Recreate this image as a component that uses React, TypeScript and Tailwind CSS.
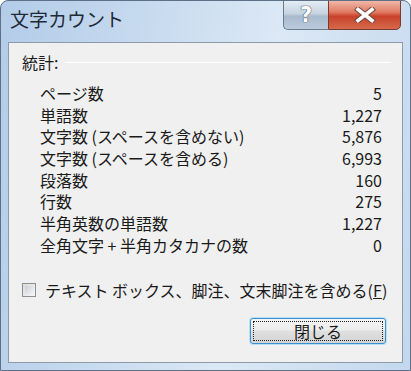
import React from "react";

const rows: [string, string][] = [
  ["ページ数", "5"],
  ["単語数", "1,227"],
  ["文字数 (スペースを含めない)", "5,876"],
  ["文字数 (スペースを含める)", "6,993"],
  ["段落数", "160"],
  ["行数", "275"],
  ["半角英数の単語数", "1,227"],
  ["全角文字 + 半角カタカナの数", "0"],
];

export default function App() {
  return (
    <div
      className="w-[411px] h-[371px] flex flex-col rounded-t-[8px] border border-[#5d7087] bg-[linear-gradient(100deg,#b3cce8_0%,#c9dcf0_35%,#dce8f5_60%,#c3d8ee_100%)] overflow-hidden text-[#1a1a1a]"
      style={{ fontFamily: '"Noto Sans CJK JP", "Noto Sans", sans-serif' }}
    >
      {/* title bar */}
      <div className="h-[41px] flex items-start shrink-0">
        <div className="pl-[9px] pt-[5px] text-[19px] leading-[26px] text-[#1e2a38]">文字カウント</div>
        <div className="flex-1" />
        <div className="flex mr-[9px] -mt-px">
          <div className="w-[45px] h-[30px] flex items-center justify-center rounded-bl-[5px] border border-[#6b7c90] border-r-0 bg-[linear-gradient(180deg,#e4ecf4_0%,#c6d3e1_45%,#a9bacd_55%,#bccbdc_100%)]">
            <span
              className="text-[21px] font-bold text-white leading-none"
              style={{ fontFamily: '"DejaVu Sans", sans-serif', textShadow: "0 0 1px #4b5d72, 0 0 1px #4b5d72, 0 0 1px #4b5d72" }}
            >
              ?
            </span>
          </div>
          <div className="w-[73px] h-[30px] flex items-center justify-center rounded-br-[5px] border border-[#7a3a2e] bg-[linear-gradient(180deg,#f0b8a8_0%,#e07a62_40%,#c8412a_55%,#d66a4c_100%)]">
            <svg width="22" height="16" viewBox="0 0 22 16">
              <path d="M4 2.5 L18 13.5 M18 2.5 L4 13.5" stroke="#6b4a44" strokeWidth="5.6" strokeLinecap="square" />
              <path d="M4 2.5 L18 13.5 M18 2.5 L4 13.5" stroke="#ffffff" strokeWidth="3.6" strokeLinecap="square" />
            </svg>
          </div>
        </div>
      </div>

      {/* client area */}
      <div className="flex-1 mx-[7px] mb-[7px] border border-[#8d9aaa] bg-[#f0f0f0] flex flex-col">
        <div className="flex items-center pl-[13px] pr-[11px] pt-[9px] h-[29px]">
          <span className="text-[16px] leading-[20px]">統計:</span>
          <div className="flex-1 ml-[7px] h-px bg-[#d5dfe5] border-b border-white" />
        </div>
        <div className="flex flex-col pl-[31px] pr-[20px] mt-[10px]">
          {rows.map(([label, value], i) => (
            <div key={i} className="flex justify-between h-[21.7px] items-center text-[16px]">
              <span className="leading-[20px]">{label}</span>
              <span className="leading-[20px]">{value}</span>
            </div>
          ))}
        </div>
        <div className="flex items-center pl-[13px] mt-[24px] h-[20px]">
          <div className="w-[14px] h-[14px] border border-[#8e8f8f] bg-[linear-gradient(135deg,#dcdcdc,#f6f6f6)] p-[2px]">
            <div className="w-full h-full bg-[linear-gradient(135deg,#cbcfd5,#f0f2f4)]" />
          </div>
          <span className="ml-[9px] text-[16px] leading-[20px]">
            テキスト ボックス、脚注、文末脚注を含める(<span className="underline">F</span>)
          </span>
        </div>
        <div className="flex justify-end pr-[16px] mt-[18px]">
          <div className="w-[136px] h-[26px] rounded-[3px] border border-[#3c8fd0] shadow-[0_0_0_1px_#b6e0f8] bg-[linear-gradient(180deg,#f4f4f4_0%,#ededed_45%,#e0e0e0_50%,#d4d4d4_100%)] p-[2px]">
            <div className="w-full h-full border border-dotted border-[#222] flex items-center justify-center text-[16px] leading-none">
              閉じる
            </div>
          </div>
        </div>
      </div>
    </div>
  );
}
